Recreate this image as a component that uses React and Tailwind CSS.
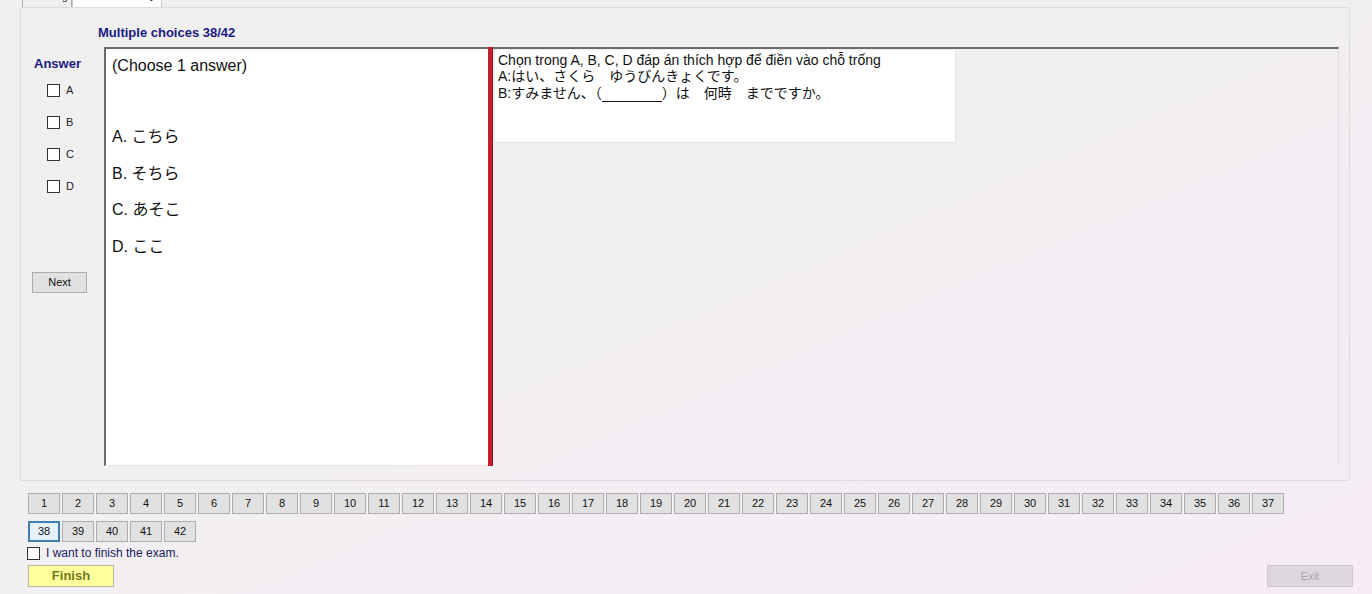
const font = { fontFamily: '"Liberation Sans", Arial, "Noto Sans CJK JP", sans-serif' };

const Check = ({ className = "" }) => (
  <span className={`inline-block w-[13px] h-[13px] border border-[#333] bg-white ${className}`} />
);

export default function App() {
  const numbers = Array.from({ length: 42 }, (_, i) => i + 1);
  const row1 = numbers.slice(0, 37);
  const row2 = numbers.slice(37);

  const NumBtn = ({ n }) => (
    <button
      className={`w-[32px] h-[21px] text-[11px] text-[#111] flex items-center justify-center ${
        n === 38
          ? "border-2 border-[#3c7fb1] bg-[#e5f1fb]"
          : "border border-[#adadad] bg-[#e1e1e1]"
      }`}
    >
      {n}
    </button>
  );

  return (
    <div
      className="w-[1372px] h-[594px] overflow-hidden bg-gradient-to-br from-[#f0f0f0] via-[#f2eff2] to-[#f6ecf6] flex flex-col"
      style={font}
    >
      {/* tab strip, mostly cut off */}
      <div className="h-[7px] overflow-hidden flex items-end pl-[22px] shrink-0">
        <div className="w-[50px] h-[18px] border border-[#adadad] border-b-0 bg-[#f0f0f0] text-[11px] text-[#222] pl-[4px] leading-[12px]">
          Reading
        </div>
        <div className="w-[90px] h-[20px] border border-[#c8c8c8] border-b-0 bg-white text-[11px] pl-[28px] leading-[14px]">
          Vocabulary
        </div>
      </div>

      {/* tab page */}
      <div className="ml-[20px] w-[1330px] h-[474px] border border-[#dcdcdc] shrink-0 flex flex-col">
        <div className="h-[39px] pl-[77px] pt-[15px] text-[13px] font-bold text-[#1a1a80]">
          Multiple choices 38/42
        </div>

        <div className="flex h-[419px]">
          {/* answer column */}
          <div className="w-[83px] flex flex-col">
            <div className="pl-[13px] pt-[7px] text-[13px] font-bold text-[#1a1a80]">Answer</div>
            <div className="pl-[26px] mt-[10px] flex flex-col gap-[19px]">
              {["A", "B", "C", "D"].map((l) => (
                <div key={l} className="flex items-center gap-[6px] h-[13px] text-[11px] text-[#222]">
                  <Check />
                  <span>{l}</span>
                </div>
              ))}
            </div>
            <button className="ml-[11px] mt-[79px] w-[55px] h-[21px] border border-[#adadad] bg-[#e1e1e1] text-[11px] text-[#111]">
              Next
            </button>
          </div>

          {/* question choices panel */}
          <div className="w-[384px] bg-white border-l-2 border-t-2 border-l-[#6b6b6b] border-t-[#6b6b6b] border-b border-b-[#e4e4e4] pl-[6px] pt-[5px] text-[16px] text-[#111]">
            <div>(Choose 1 answer)</div>
            <div className="mt-[47px] flex flex-col gap-[12.5px]">
              <div>A. こちら</div>
              <div>B. そちら</div>
              <div>C. あそこ</div>
              <div>D. ここ</div>
            </div>
          </div>

          {/* splitter */}
          <div className="w-[5px] bg-[#c41f2b] border-r border-r-[#8a1820]" />

          {/* question text panel */}
          <div className="w-[846px] border-t-2 border-t-[#6b6b6b] border-r border-r-[#e0dbe0] pl-[2px] pt-[1px]">
            <div className="w-[461px] h-[93px] bg-white border-b border-r border-[#e4e4e4] pl-[3px] pt-[2px] text-[14px] leading-[16px] text-[#111]">
              <div>Chọn trong A, B, C, D đáp án thích hợp để điền vào chỗ trống</div>
              <div>A:はい、さくら　ゆうびんきょくです。</div>
              <div className="mt-[1px]">B:すみません、（<span className="inline-block w-[60px] border-b border-[#111]">&nbsp;</span>）は　何時　までですか。</div>
            </div>
          </div>
        </div>
      </div>

      {/* question number buttons */}
      <div className="pl-[28px] mt-[12px] flex flex-col gap-[7px]">
        <div className="flex gap-[2px]">
          {row1.map((n) => (
            <NumBtn key={n} n={n} />
          ))}
        </div>
        <div className="flex gap-[2px]">
          {row2.map((n) => (
            <NumBtn key={n} n={n} />
          ))}
        </div>
      </div>

      <div className="pl-[27px] mt-[2px] flex items-center gap-[6px] text-[12px] text-[#1a1a60]">
        <Check />
        <span>I want to finish the exam.</span>
      </div>

      <div className="pl-[28px] pr-[19px] mt-[3px] flex justify-between">
        <button className="w-[86px] h-[22px] border border-[#b8b8a0] bg-[#ffff9c] text-[13px] font-bold text-[#6f7a20]">
          Finish
        </button>
        <button className="w-[86px] h-[22px] border border-[#cfc8cf] bg-[#ddd6dd] text-[11px] text-[#aaa4aa]">
          Exit
        </button>
      </div>
    </div>
  );
}
